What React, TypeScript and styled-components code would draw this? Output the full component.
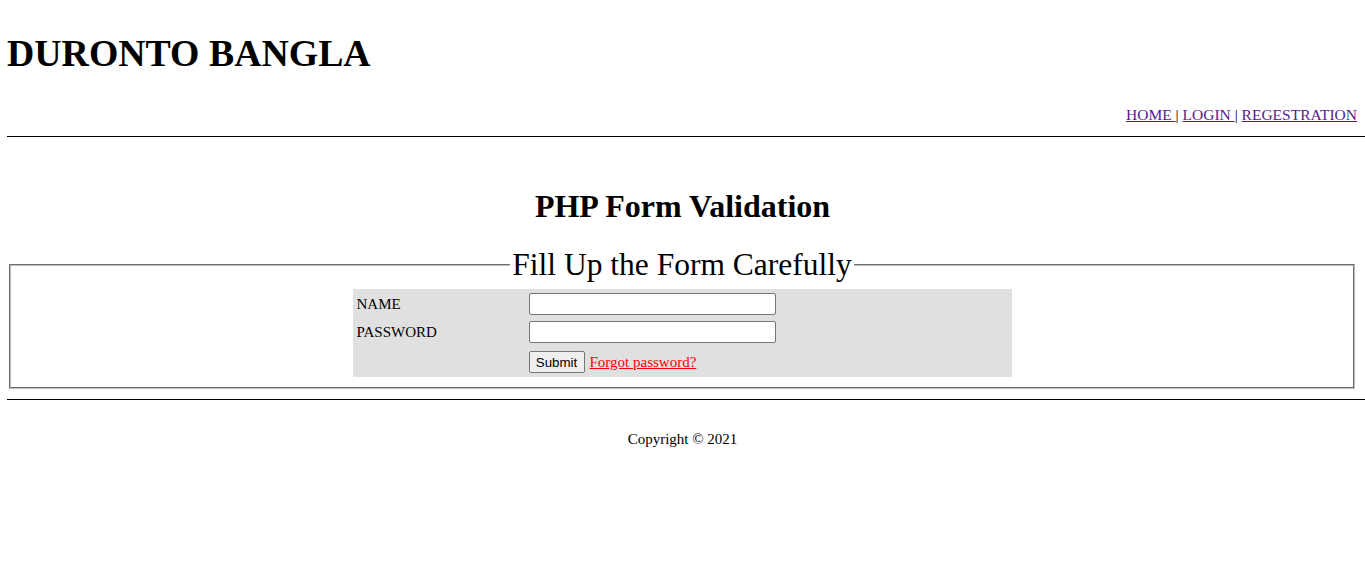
import styled, { createGlobalStyle } from 'styled-components'

const GlobalStyle = createGlobalStyle`
  html, body {
    margin: 0;
    padding: 0;
    background: #fff;
  }
  body {
    font-family: "Liberation Serif", "Times New Roman", serif;
    font-size: 15px;
    color: #000;
  }
`

export default function App() {
  return (
    <Page>
      <GlobalStyle />
      <Title>DURONTO BANGLA</Title>
      <Nav>
        <NavLink href="#">HOME </NavLink>| <NavLink href="#">LOGIN </NavLink>| <NavLink href="#">REGESTRATION</NavLink>
      </Nav>
      <Rule />
      <Heading>PHP Form Validation</Heading>
      <Box>
        <Legend>Fill Up the Form Carefully</Legend>
        <FormTable>
          <Label>NAME</Label>
          <Field type="text" />
          <Label>PASSWORD</Label>
          <Field type="password" />
          <span />
          <Actions>
            <SubmitButton type="button">Submit</SubmitButton>
            <ForgotLink href="#">Forgot password?</ForgotLink>
          </Actions>
        </FormTable>
      </Box>
      <Rule $top={10} />
      <Copyright>Copyright © 2021</Copyright>
    </Page>
  )
}

const Page = styled.div`
  display: flow-root;
  padding: 0 8px;
  min-height: 586px;
  box-sizing: border-box;
`

const Title = styled.h1`
  margin: 32px 0 0 -1px;
  font-size: 37.8px;
  line-height: 42px;
  font-weight: bold;
`

const Nav = styled.nav`
  margin-top: 32px;
  text-align: right;
  font-size: 15.5px;
  line-height: 18px;
`

const NavLink = styled.a`
  color: #551a8b;
  text-decoration: underline;
  white-space: pre;
`

const Rule = styled.hr<{ $top?: number }>`
  margin: ${p => p.$top ?? 12}px -8px 0 -1px;
  border: 0;
  border-top: 1px solid #000;
  height: 0;
`

const Heading = styled.h2`
  margin: 51px 0 0;
  text-align: center;
  font-size: 32px;
  line-height: 36px;
  font-weight: bold;
`

const Box = styled.fieldset`
  margin: 23px 2px 0 1px;
  padding: 6px 12px 10px;
  border: 2px groove #c0c0c0;
  min-width: 0;
`

const Legend = styled.legend`
  margin: 0 auto;
  padding: 0 2px;
  font-size: 31.5px;
  line-height: 36px;
`

const FormTable = styled.div`
  width: 659px;
  margin: 0 auto;
  box-sizing: border-box;
  padding: 4px 4px 4px;
  background: #e0e0e0;
  display: grid;
  grid-template-columns: 172px 1fr;
  row-gap: 6px;
  align-items: center;
`

const Label = styled.span`
  font-size: 15px;
  line-height: 17px;
`

const Field = styled.input`
  width: 247px;
  height: 22px;
  box-sizing: border-box;
  margin: 0;
  border: 1px solid #767676;
  border-radius: 2px;
  background: #fff;
  padding: 1px 2px;
`

const Actions = styled.div`
  margin-top: 2px;
  display: flex;
  align-items: baseline;
  gap: 5px;
`

const SubmitButton = styled.button`
  width: 56px;
  height: 22px;
  box-sizing: border-box;
  padding: 1px 6px;
  font-family: "Liberation Sans", Arial, sans-serif;
  font-size: 13.3px;
  color: #000;
  background: #efefef;
  border: 1px solid #767676;
  border-radius: 2px;
`

const ForgotLink = styled.a`
  color: #f00;
  font-size: 15px;
  text-decoration: underline;
`

const Copyright = styled.p`
  margin: 31px 0 0;
  text-align: center;
  font-size: 15px;
  line-height: 17px;
`
